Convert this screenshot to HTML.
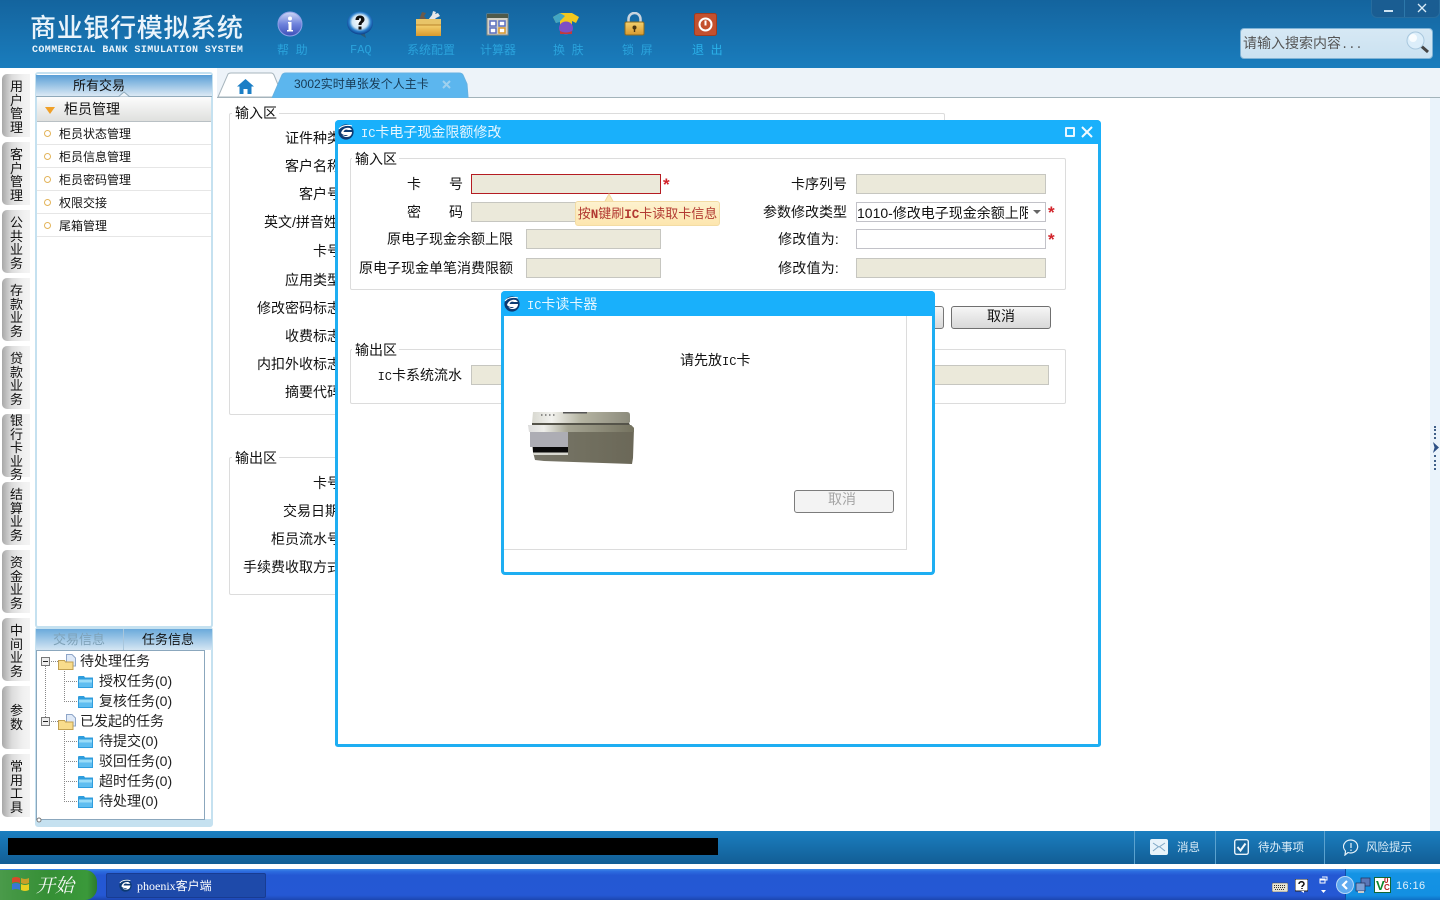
<!DOCTYPE html>
<html lang="zh"><head><meta charset="utf-8"><title>商业银行模拟系统</title>
<style>
html,body{margin:0;padding:0;width:1440px;height:900px;overflow:hidden;background:#fff}
body{position:relative;font:14px/16px "Liberation Sans","WenQuanYi Zen Hei","Noto Sans CJK SC",sans-serif;color:#111}
div,span,svg{position:absolute;box-sizing:border-box}
.t{white-space:nowrap}
.ic{position:static;font-family:"Liberation Mono",monospace;font-size:12px}
.fs{border:1px solid #dcdcdc;border-radius:2px}
.lg{background:#fff;padding:0 2px 0 3px;white-space:nowrap}
.d{background:#ebe9da;border:1px solid #c6c6c0}
.w{background:#fff;border:1px solid #c2c2c8}
.tab{left:2px;width:28px;height:63px;border-radius:5px 0 0 5px;background:linear-gradient(90deg,#a8a8a8,#dcdcdc 35%,#f0f0f0 75%,#f4f4f4);text-align:center;font-size:13px;line-height:13.5px;color:#111;padding-left:1px}
.m{left:37px;width:174px;height:23px;border-bottom:1px solid #e6e6e6;font-size:12px;line-height:23px;padding:1px 0 0 22px;color:#111}
.m:before{content:"";position:absolute;left:7px;top:8px;width:7px;height:7px;border-radius:50%;border:1.5px solid #e3b45a;box-sizing:border-box;background:#fff}
.hl{font-size:12px;color:#2aa3dc;white-space:nowrap;line-height:14px;top:43px}
.req{color:#d2232a;font:bold 17px/16px "Liberation Sans",sans-serif}
.tr{font-size:14px;line-height:16px;white-space:nowrap;color:#222}
.dot-h{height:0;border-top:1px dotted #888}
.dot-v{width:0;border-left:1px dotted #888}
</style></head><body>
<svg width="0" height="0" style="position:absolute">
<defs>
<symbol id="ie" viewBox="0 0 16 16"><circle cx="8" cy="8" r="7.6" fill="#0c3a73"/><path d="M3 9c1-4 5-6 9-5l2 2-4 0c-2-1-4 0-4.500 2h8.500c0 3-2 5-5 5-3 0-4-1-4.500-2 2 1 4 1.500 5.500 0H7C5 11 4 10 3 9z" fill="#fff"/><path d="M1 5c3-4 9-4 13-3" stroke="#fff" stroke-width="1" fill="none"/></symbol>
<symbol id="fo" viewBox="0 0 15 13"><path d="M0 2q0-1 1-1h5l1 1.500h8V13H0z" fill="#2f9ddd"/><rect x="1" y="4.500" width="13" height="7.500" fill="#5fbdf0"/><rect x="1" y="4.500" width="13" height="3" fill="#9adcf8"/></symbol>
<symbol id="fy" viewBox="0 0 18 16"><path d="M8.500.5h5.500l3.500 3.500v8h-9z" fill="#dfe9f7" stroke="#8fa6c9"/><path d="M.5 6.500h6l1 1.500h7.500v7.500H.5z" fill="#f8dc8c" stroke="#c2a050"/></symbol>
<symbol id="mn" viewBox="0 0 9 9"><rect x=".5" y=".5" width="8" height="8" fill="#eee" stroke="#777"/><path d="M2 4.500h5" stroke="#222"/></symbol>
<linearGradient id="gi" x1="0" y1="0" x2="0" y2="1"><stop offset="0" stop-color="#cfd8f6"/><stop offset=".5" stop-color="#6f83dc"/><stop offset="1" stop-color="#3d50b8"/></linearGradient>
<radialGradient id="gq" cx=".5" cy=".45" r=".55"><stop offset="0" stop-color="#fff"/><stop offset=".55" stop-color="#cfe6f6"/><stop offset=".75" stop-color="#2a80cc"/><stop offset="1" stop-color="#0b3c88"/></radialGradient>
<linearGradient id="gb" x1="0" y1="0" x2="0" y2="1"><stop offset="0" stop-color="#f4d06e"/><stop offset="1" stop-color="#d89a2e"/></linearGradient>
<linearGradient id="gr" x1="0" y1="0" x2="1" y2="0"><stop offset="0" stop-color="#77756a"/><stop offset=".5" stop-color="#727060"/><stop offset="1" stop-color="#6b6858"/></linearGradient>
<linearGradient id="gt" x1="0" y1="0" x2="1" y2="0"><stop offset="0" stop-color="#d8d8d0"/><stop offset=".2" stop-color="#f2f2ee"/><stop offset=".5" stop-color="#b5b4a2"/><stop offset="1" stop-color="#8c8b7c"/></linearGradient>
<linearGradient id="gt2" x1="0" y1="0" x2="1" y2="0"><stop offset="0" stop-color="#ddd"/><stop offset=".15" stop-color="#eeeeea"/><stop offset=".38" stop-color="#a5a492"/><stop offset="1" stop-color="#74725f"/></linearGradient>
</defs></svg>

<!-- header -->
<div style="left:0;top:0;width:1440px;height:68px;background:linear-gradient(180deg,#14649e,#1a7dbd)"></div>
<div class="t" style="left:30px;top:13px;font-size:26px;line-height:30px;letter-spacing:.7px;color:#eaf4fb;font-family:'Liberation Sans','Noto Sans CJK SC',sans-serif;font-weight:500">商业银行模拟系统</div>
<div class="t" style="left:32px;top:45px;font:bold 10px/12px 'Liberation Mono',monospace;letter-spacing:.4px;color:#eaf4fb">COMMERCIAL BANK SIMULATION SYSTEM</div>

<svg style="left:277px;top:11px" width="26" height="26" viewBox="0 0 26 26"><circle cx="13" cy="13" r="12" fill="url(#gi)" stroke="#8fa0e6"/><circle cx="13" cy="7.500" r="2" fill="#fff"/><path d="M11 11h3.500v8H16v1.500h-6V19h1.500v-6.500H11z" fill="#fff"/></svg>
<div class="hl" style="left:277px;">帮&nbsp;&nbsp;助</div>
<svg style="left:346px;top:11px" width="28" height="27" viewBox="0 0 28 27"><path d="M12 20l6 0 2 7-5-3z" fill="#2a5a7a"/><ellipse cx="14" cy="12" rx="13" ry="11.500" fill="url(#gq)"/><path d="M9.500 9c0-3 2-4.500 4.500-4.500s4.500 1.500 4.500 4c0 3-3 3-3 5.500h-3c0-3.500 2.500-3.500 2.500-5.500 0-1-.5-1.500-1-1.500s-1 .7-1 2zM12.500 15.500h3v3h-3z" fill="#111"/></svg>
<div class="hl" style="left:350px;font-family:'Liberation Mono',monospace;font-size:12px">FAQ</div>
<svg style="left:415px;top:11px" width="27" height="26" viewBox="0 0 27 26"><path d="M4 9l3-8 4 1-2 3 3 4z" fill="#6b5a4a"/><path d="M13 9l4-5 1-4 3 1-1 2 3-1 2 3-4 2-2 2z" fill="#e8e8e8"/><rect x="1" y="8" width="25" height="6" fill="#e8c468"/><rect x="1" y="14" width="25" height="11" fill="url(#gb)"/><path d="M1 14h25" stroke="#b9842a"/></svg>
<div class="hl" style="left:407px;">系统配置</div>
<svg style="left:486px;top:13px" width="23" height="23" viewBox="0 0 23 23"><rect x="1" y="1" width="21" height="21" fill="#d4d2c8" stroke="#8a8a80"/><rect x="1" y="1" width="21" height="4" fill="#4f5a4a"/><rect x="4" y="8" width="6" height="5" fill="#fff" stroke="#5a6fc0" stroke-width="1.500"/><rect x="13" y="8" width="6" height="5" fill="#fff" stroke="#5a6fc0" stroke-width="1.500"/><rect x="4" y="15" width="6" height="5" fill="#fff" stroke="#5a6fc0" stroke-width="1.500"/><rect x="13" y="15" width="6" height="5" fill="#fff" stroke="#d9992e" stroke-width="1.500"/></svg>
<div class="hl" style="left:480px;">计算器</div>
<svg style="left:552px;top:12px" width="28" height="23" viewBox="0 0 28 23"><path d="M1 5l7-4h12l7 4-3 6-4-2v13H8V9L4 11z" fill="#f2c81e"/><path d="M1 5l7-4 5 3-5 5v1l-4 1z" fill="#42a5c4"/><ellipse cx="14" cy="16" rx="7" ry="6.500" fill="#7d4fc6"/><path d="M8 19c4 2 8 2 12 0v3H8z" fill="#c23a3a"/></svg>
<div class="hl" style="left:553px;">换&nbsp;&nbsp;肤</div>
<svg style="left:624px;top:12px" width="21" height="24" viewBox="0 0 21 24"><path d="M4.500 11V7a6 6 0 0 1 12 0v4" fill="none" stroke="#c9d4de" stroke-width="2.500"/><rect x="1" y="10" width="19" height="13" rx="1.500" fill="url(#gb)" stroke="#8a6a20"/><circle cx="10.500" cy="15.500" r="2" fill="#4a3510"/><rect x="9.800" y="16" width="1.400" height="4" fill="#4a3510"/></svg>
<div class="hl" style="left:622px;">锁&nbsp;&nbsp;屏</div>
<svg style="left:694px;top:13px" width="23" height="23" viewBox="0 0 23 23"><rect x=".5" y=".5" width="22" height="22" rx="2" fill="#c4502e" stroke="#a03c20"/><circle cx="11.500" cy="11.500" r="6" fill="none" stroke="#fff" stroke-width="2"/><path d="M11.500 7.500v5" stroke="#fff" stroke-width="2"/></svg>
<div class="hl" style="left:692px;color:#2bb2ea">退&nbsp;&nbsp;出</div>

<div style="left:1371px;top:-4px;width:69px;height:22px;border-radius:0 0 6px 6px;background:#1a5d92;border:1px solid #276d9f"></div>
<div style="left:1404px;top:0;width:1px;height:17px;background:#2d78aa"></div>
<div style="left:1384px;top:10px;width:9px;height:2px;background:#cde3f2"></div>
<svg style="left:1417px;top:3px" width="10" height="10" viewBox="0 0 10 10"><path d="M1 1l8 8M9 1l-8 8" stroke="#d9ebf7" stroke-width="1.300"/></svg>
<div style="left:1240px;top:28px;width:193px;height:31px;border-radius:4px;background:linear-gradient(180deg,#d6e8f4,#cbe2f1);border:1px solid #7fb3d6"></div>
<div class="t" style="left:1243px;top:35px;color:#555">请输入搜索内容<span class="ic">...</span></div>
<svg style="left:1405px;top:30px" width="26" height="25" viewBox="0 0 26 25"><path d="M15 15l8 7" stroke="#444" stroke-width="3"/><circle cx="10.500" cy="10.500" r="8.500" fill="#dceefa" stroke="#a9c8de"/><circle cx="8" cy="8" r="4" fill="#fff" opacity=".8"/></svg>

<!-- left side tabs -->
<div class="tab" style="top:74px;padding-top:6px">用<br>户<br>管<br>理</div>
<div class="tab" style="top:142px;padding-top:6px">客<br>户<br>管<br>理</div>
<div class="tab" style="top:210px;padding-top:6px">公<br>共<br>业<br>务</div>
<div class="tab" style="top:278px;padding-top:6px">存<br>款<br>业<br>务</div>
<div class="tab" style="top:346px;padding-top:6px">贷<br>款<br>业<br>务</div>
<div class="tab" style="top:414px;padding-top:0">银<br>行<br>卡<br>业<br>务</div>
<div class="tab" style="top:482px;padding-top:6px">结<br>算<br>业<br>务</div>
<div class="tab" style="top:550px;padding-top:6px">资<br>金<br>业<br>务</div>
<div class="tab" style="top:618px;padding-top:6px">中<br>间<br>业<br>务</div>
<div class="tab" style="top:686px;padding-top:18px">参<br>数</div>
<div class="tab" style="top:754px;padding-top:6px">常<br>用<br>工<br>具</div>

<!-- left panel -->
<div style="left:35px;top:72px;width:178px;height:556px;background:#fff;border:2px solid #c5e1f0;border-radius:3px"></div>
<div style="left:36px;top:75px;width:176px;height:22px;background:linear-gradient(180deg,#5a9fd6,#dbe9f4);border-bottom:1px solid #8fa9ba"></div>
<div class="t" style="left:73px;top:78px;font-size:13px">所有交易</div>
<svg style="left:118px;top:91px" width="12" height="6" viewBox="0 0 12 6"><path d="M0 6l6-5 6 5z" fill="#eef4f9" stroke="#8fa9ba"/></svg>
<div style="left:37px;top:97px;width:174px;height:25px;background:linear-gradient(180deg,#fcfcfc,#dfe0de);border-bottom:1px solid #b9c0c4"></div>
<svg style="left:45px;top:107px" width="10" height="7" viewBox="0 0 10 7"><path d="M0 0h10L5 7z" fill="#f0a028"/></svg>
<div class="t" style="left:64px;top:101px;font-size:14px">柜员管理</div>
<div class="m" style="top:122px">柜员状态管理</div>
<div class="m" style="top:145px">柜员信息管理</div>
<div class="m" style="top:168px">柜员密码管理</div>
<div class="m" style="top:191px">权限交接</div>
<div class="m" style="top:214px">尾箱管理</div>

<div style="left:35px;top:627px;width:178px;height:200px;background:#fff;border:2px solid #c5e1f0;border-radius:3px;border-bottom:8px solid #c5e1f0"></div>
<div style="left:36px;top:629px;width:87px;height:21px;background:linear-gradient(180deg,#6aaadb,#d5e6f3)"></div>
<div style="left:123px;top:629px;width:89px;height:21px;background:linear-gradient(180deg,#6aaadb,#d5e6f3);border-left:1px solid #a8c6dc"></div>
<div class="t" style="left:53px;top:632px;color:#7fa2b8;font-size:13px">交易信息</div>
<div class="t" style="left:142px;top:632px;font-size:13px">任务信息</div>
<div style="left:36px;top:650px;width:169px;height:170px;background:#fff;border:1px solid #8ba7bd"></div>
<svg style="left:36px;top:817px" width="6" height="6" viewBox="0 0 6 6"><circle cx="3" cy="3" r="2" fill="#fff" stroke="#777"/></svg>

<div class="dot-v" style="left:45px;top:664px;height:55px"></div>
<div class="dot-v" style="left:64px;top:668px;height:34px"></div>
<div class="dot-v" style="left:64px;top:728px;height:74px"></div>
<div class="dot-h" style="left:49px;top:661px;width:9px"></div>
<div class="dot-h" style="left:49px;top:721px;width:9px"></div>
<div class="dot-h" style="left:64px;top:681px;width:13px"></div>
<div class="dot-h" style="left:64px;top:701px;width:13px"></div>
<div class="dot-h" style="left:64px;top:741px;width:13px"></div>
<div class="dot-h" style="left:64px;top:761px;width:13px"></div>
<div class="dot-h" style="left:64px;top:781px;width:13px"></div>
<div class="dot-h" style="left:64px;top:801px;width:13px"></div>
<svg style="left:41px;top:657px" width="9" height="9"><use href="#mn"/></svg>
<svg style="left:41px;top:717px" width="9" height="9"><use href="#mn"/></svg>
<svg style="left:58px;top:654px" width="18" height="16"><use href="#fy" width="18" height="16"/></svg>
<svg style="left:58px;top:714px" width="18" height="16"><use href="#fy" width="18" height="16"/></svg>
<svg style="left:78px;top:675px" width="15" height="13"><use href="#fo" width="15" height="13"/></svg>
<svg style="left:78px;top:695px" width="15" height="13"><use href="#fo" width="15" height="13"/></svg>
<svg style="left:78px;top:735px" width="15" height="13"><use href="#fo" width="15" height="13"/></svg>
<svg style="left:78px;top:755px" width="15" height="13"><use href="#fo" width="15" height="13"/></svg>
<svg style="left:78px;top:775px" width="15" height="13"><use href="#fo" width="15" height="13"/></svg>
<svg style="left:78px;top:795px" width="15" height="13"><use href="#fo" width="15" height="13"/></svg>
<div class="tr" style="left:80px;top:653px">待处理任务</div>
<div class="tr" style="left:99px;top:673px">授权任务(0)</div>
<div class="tr" style="left:99px;top:693px">复核任务(0)</div>
<div class="tr" style="left:80px;top:713px">已发起的任务</div>
<div class="tr" style="left:99px;top:733px">待提交(0)</div>
<div class="tr" style="left:99px;top:753px">驳回任务(0)</div>
<div class="tr" style="left:99px;top:773px">超时任务(0)</div>
<div class="tr" style="left:99px;top:793px">待处理(0)</div>

<!-- tab bar -->
<div style="left:217px;top:68px;width:1223px;height:30px;background:#edf3f9;border-bottom:1px solid #a3b3ba"></div>
<svg style="left:217px;top:72px" width="252" height="26" viewBox="0 0 252 26"><path d="M1 25L11 2q1-1 3-1h40q2 0 3 2l9 22z" fill="#fff" stroke="#a7b5bd"/><path d="M55 26L65 3q1-2 4-2h173q3 0 4 2l4 9 1 13v1z" fill="#5cb6ee" stroke="#66b2e2"/></svg>
<svg style="left:237px;top:79px" width="17" height="15" viewBox="0 0 17 15"><path d="M8.500 0L0 7.500h2.500V15h4v-5h4v5h4V7.500H17z" fill="#1c7fc6"/></svg>
<div class="t" style="left:294px;top:76px;font-size:12px;color:#163a55">3002实时单张发个人主卡</div>
<svg style="left:442px;top:80px" width="9" height="9" viewBox="0 0 9 9"><path d="M1 1l7 7M8 1l-7 7" stroke="#9fd0ee" stroke-width="2"/></svg>

<!-- right handle -->
<div style="left:1430px;top:98px;width:10px;height:733px;background:#eaf3fb"></div>
<div style="left:1434px;top:426px;width:2px;height:13px;border-left:2px dotted #3f5f88"></div>
<div style="left:1434px;top:455px;width:2px;height:15px;border-left:2px dotted #3f5f88"></div>
<svg style="left:1433px;top:442px" width="6" height="11" viewBox="0 0 6 11"><path d="M0 0l6 5.500L0 11l1.500-5.500z" fill="#2c4f85"/></svg>

<!-- background form -->
<div class="fs" style="left:229px;top:113px;width:716px;height:302px"></div>
<div class="lg" style="left:232px;top:105px">输入区</div>
<div class="t" style="right:1099px;top:130px">证件种类</div>
<div class="t" style="right:1099px;top:158px">客户名称</div>
<div class="t" style="right:1099px;top:186px">客户号</div>
<div class="t" style="left:264px;top:214px">英文/拼音姓名</div>
<div class="t" style="right:1099px;top:243px">卡号</div>
<div class="t" style="right:1099px;top:272px">应用类型</div>
<div class="t" style="right:1099px;top:300px">修改密码标志</div>
<div class="t" style="right:1099px;top:328px">收费标志</div>
<div class="t" style="right:1099px;top:356px">内扣外收标志</div>
<div class="t" style="right:1099px;top:384px">摘要代码</div>
<div class="fs" style="left:229px;top:457px;width:300px;height:138px"></div>
<div class="lg" style="left:232px;top:450px">输出区</div>
<div class="t" style="right:1099px;top:475px">卡号</div>
<div class="t" style="left:283px;top:503px">交易日期</div>
<div class="t" style="right:1099px;top:531px">柜员流水号</div>
<div class="t" style="right:1099px;top:559px">手续费收取方式</div>

<!-- dialog 1 -->
<div style="left:335px;top:120px;width:766px;height:627px;background:#fff;border:3px solid #1eaef2;border-top:0;border-radius:4px 4px 3px 3px"></div>
<div style="left:335px;top:120px;width:766px;height:24px;background:#19b0fb;border-radius:4px 4px 0 0"></div>
<svg style="left:338px;top:124px" width="16" height="16"><use href="#ie" width="16" height="16"/></svg>
<div class="t" style="left:361px;top:124px;color:#e8f7ff"><span class="ic">IC</span>卡电子现金限额修改</div>
<div style="left:1065px;top:127px;width:10px;height:10px;border:2px solid #e6f6ff;border-radius:1px"></div>
<svg style="left:1081px;top:126px" width="12" height="12" viewBox="0 0 12 12"><path d="M1 1l10 10M11 1L1 11" stroke="#f2fbff" stroke-width="2"/></svg>

<div class="fs" style="left:350px;top:158px;width:716px;height:132px"></div>
<div class="lg" style="left:352px;top:151px">输入区</div>
<div class="t" style="left:407px;top:176px">卡</div><div class="t" style="left:449px;top:176px">号</div>
<div class="d" style="left:471px;top:174px;width:190px;height:20px;border-color:#b51c22"></div>
<div class="req" style="left:663px;top:177px">*</div>
<div class="t" style="left:407px;top:204px">密</div><div class="t" style="left:449px;top:204px">码</div>
<div class="d" style="left:471px;top:202px;width:190px;height:20px"></div>
<div class="t" style="right:927px;top:231px">原电子现金余额上限</div>
<div class="d" style="left:526px;top:229px;width:135px;height:20px"></div>
<div class="t" style="right:927px;top:260px">原电子现金单笔消费限额</div>
<div class="d" style="left:526px;top:258px;width:135px;height:20px"></div>

<div class="t" style="right:593px;top:176px">卡序列号</div>
<div class="d" style="left:856px;top:174px;width:190px;height:20px"></div>
<div class="t" style="right:593px;top:204px">参数修改类型</div>
<div class="w" style="left:856px;top:202px;width:190px;height:20px;overflow:hidden"><span class="t" style="left:0;top:2px;width:171px;overflow:hidden">1010-修改电子现金余额上限</span></div>
<svg style="left:1033px;top:210px" width="8" height="4" viewBox="0 0 8 4"><path d="M0 0h8L4 4z" fill="#666"/></svg>
<div class="req" style="left:1048px;top:205px">*</div>
<div class="t" style="right:601px;top:231px;letter-spacing:.2px">修改值为:</div>
<div class="w" style="left:856px;top:229px;width:190px;height:20px"></div>
<div class="req" style="left:1048px;top:232px">*</div>
<div class="t" style="right:601px;top:260px;letter-spacing:.2px">修改值为:</div>
<div class="d" style="left:856px;top:258px;width:190px;height:20px"></div>

<svg style="left:604px;top:193px" width="10" height="10" viewBox="0 0 10 10"><path d="M0 10L5 1l5 9z" fill="#fdeab8" stroke="#f2d8a0"/></svg>
<div class="t" style="left:575px;top:201px;width:145px;height:25px;background:linear-gradient(180deg,#fdf2cf,#fde6ae);border:1px solid #f3dca4;border-radius:3px;color:#b23a32;font-size:13px;line-height:24px;text-align:center">按<span class="ic" style="font-size:12.500px;font-weight:bold">N</span>键刷<span class="ic" style="font-size:12.500px;font-weight:bold">IC</span>卡读取卡信息</div>

<div style="left:840px;top:306px;width:104px;height:23px;background:linear-gradient(180deg,#f6f6f6,#d8d8d8);border:1px solid #777;border-radius:3px"></div>
<div class="t" style="left:951px;top:306px;width:100px;height:23px;background:linear-gradient(180deg,#f6f6f6,#d8d8d8);border:1px solid #6f6f6f;border-radius:3px;text-align:center;line-height:19px">取消</div>

<div class="fs" style="left:350px;top:349px;width:716px;height:55px"></div>
<div class="lg" style="left:352px;top:342px">输出区</div>
<div class="t" style="right:978px;top:367px"><span class="ic">IC</span>卡系统流水</div>
<div class="d" style="left:471px;top:365px;width:578px;height:20px"></div>

<!-- dialog 2 -->
<div style="left:501px;top:291px;width:434px;height:284px;background:#fff;border:3px solid #1eaef2;border-top:0;border-radius:4px"></div>
<div style="left:501px;top:291px;width:434px;height:25px;background:#19b0fb;border-radius:4px 4px 0 0"></div>
<svg style="left:504px;top:296px" width="16" height="16"><use href="#ie" width="16" height="16"/></svg>
<div class="t" style="left:527px;top:296px;color:#e8f7ff"><span class="ic">IC</span>卡读卡器</div>
<div style="left:504px;top:316px;width:403px;height:234px;border-right:1px solid #dcdcdc;border-bottom:1px solid #dcdcdc"></div>
<div class="t" style="left:680px;top:352px;color:#111">请先放<span class="ic">IC</span>卡</div>
<svg style="left:528px;top:410px" width="107" height="55" viewBox="0 0 107 55">
<path d="M5 2h94q3 0 3 3v7l-1 1H4z" fill="url(#gt)"/>
<path d="M4 13h97l1 2H4z" fill="#55544a"/>
<path d="M0 15h103l3 3-1 30-1 6-88-3-9-1-2-8-3-22z" fill="url(#gr)"/>
<path d="M0 15h103l3 3v4H1z" fill="url(#gt2)"/>
<rect x="2" y="22" width="38" height="15" fill="#adadb4"/>
<rect x="5" y="37" width="35" height="5.500" fill="#0a0a0a"/>
<path d="M5 42.500h35v2.500H5z" fill="#d8d8d0"/>
<path d="M13 5h1.500M17 5h1.500M21 5h1.500M25 5h1.500" stroke="#333"/>
<rect x="35" y="2" width="24" height="1.500" fill="#555"/>
</svg>
<div class="t" style="left:794px;top:490px;width:100px;height:23px;background:#f3f3f3;border:1px solid #7c7c7c;border-radius:3px;text-align:center;line-height:17px;padding-right:4px;color:#a5a5a5">取消</div>

<!-- status bar -->
<div style="left:0;top:831px;width:1440px;height:33px;background:linear-gradient(180deg,#1b7fc0,#125e95)"></div>
<div style="left:8px;top:838px;width:710px;height:17px;background:#000"></div>
<div style="left:1134px;top:831px;width:1px;height:33px;background:#5ba2cf"></div>
<div style="left:1215px;top:831px;width:1px;height:33px;background:#5ba2cf"></div>
<div style="left:1324px;top:831px;width:1px;height:33px;background:#5ba2cf"></div>
<svg style="left:1150px;top:839px" width="18" height="16" viewBox="0 0 18 16"><rect width="18" height="16" rx="2" fill="#e8f3fa"/><path d="M3 4l6 4 6-4M3 12l5-4M15 12l-5-4" stroke="#7fa8c6" fill="none"/></svg>
<div class="t" style="left:1177px;top:840px;font-size:11.500px;color:#dcedf8">消息</div>
<svg style="left:1234px;top:839px" width="15" height="16" viewBox="0 0 15 16"><rect x=".7" y=".7" width="13.600" height="14.600" rx="2" fill="#19689f" stroke="#e8f3fa" stroke-width="1.400"/><path d="M3.500 8l3 3.500 5-7" stroke="#f2f8fc" stroke-width="2" fill="none"/></svg>
<div class="t" style="left:1258px;top:840px;font-size:11.500px;color:#dcedf8">待办事项</div>
<svg style="left:1343px;top:839px" width="16" height="17" viewBox="0 0 16 17"><path d="M8 1a7 6.500 0 1 1-3 12.500L2 16l.5-4A7 6.500 0 0 1 8 1z" fill="none" stroke="#e8f3fa" stroke-width="1.200"/><path d="M8 4v5M8 10.500v1.500" stroke="#e8f3fa" stroke-width="1.200"/></svg>
<div class="t" style="left:1366px;top:840px;font-size:11.500px;color:#dcedf8">风险提示</div>

<!-- taskbar -->
<div style="left:0;top:869px;width:1440px;height:31px;background:linear-gradient(180deg,#3f8ae8 0,#2c6bdf 8%,#2458d3 20%,#2558d4 85%,#1c46b0)"></div>
<div style="left:1345px;top:869px;width:95px;height:31px;background:linear-gradient(180deg,#35a6f0,#1493e4 15%,#1390e2 85%,#0f6fc4);border-left:1px solid #0f4ea8"></div>
<div style="left:0;top:870px;width:97px;height:30px;background:linear-gradient(90deg,#4a9a4a,#358f35 50%,#3a993a 90%,#2c7a2c);border-radius:0 12px 12px 0"></div>
<svg style="left:11px;top:875px" width="19" height="18" viewBox="0 0 19 18"><path d="M1 3q4-2 8 0v5q-4-2-8 0z" fill="#d84a2a"/><path d="M10 3q4 2 8 0v5q-4 2-8 0z" fill="#c8a028"/><path d="M1 9q4-2 8 0v6q-4-2-8 0z" fill="#3a77d4"/><path d="M10 9q4 2 8 0v6q-4 2-8 0z" fill="#e8d020"/></svg>
<div class="t" style="left:36px;top:873px;font:italic 19px/24px 'Noto Serif CJK SC','WenQuanYi Zen Hei',sans-serif;color:#f4f8f4">开始</div>
<div style="left:106px;top:873px;width:160px;height:25px;background:#1e4aaa;border:1px solid #183c92;border-radius:2px"></div>
<svg style="left:119px;top:879px" width="13" height="13"><use href="#ie" width="13" height="13"/></svg>
<div class="t" style="left:137px;top:879px;font:12px/14px 'Liberation Serif','WenQuanYi Zen Hei',serif;color:#fff">phoenix客户端</div>
<svg style="left:1272px;top:880px" width="16" height="12" viewBox="0 0 16 12"><rect y="3" width="16" height="9" rx="1" fill="#e7e3d2" stroke="#444" stroke-width=".6"/><path d="M2 5.500h12M2 7.500h12M3 9.500h10" stroke="#333" stroke-dasharray="1 1"/></svg>
<svg style="left:1295px;top:879px" width="13" height="14" viewBox="0 0 13 14"><rect width="13" height="12" rx="1" fill="#fff" stroke="#222"/><path d="M6 12l3 2v-2" fill="#fff"/><path d="M4 5c0-3 5-3 5 0 0 1.500-2 1.500-2 3M7 9v1" stroke="#111" stroke-width="1.500" fill="none"/></svg>
<svg style="left:1319px;top:876px" width="9" height="18" viewBox="0 0 9 18"><path d="M3 1h5v3H1V3" fill="none" stroke="#fff"/><rect x="1" y="3" width="5" height="4" fill="none" stroke="#fff"/><path d="M2 14h5l-2.500 3z" fill="#fff"/></svg>
<svg style="left:1336px;top:876px" width="18" height="18" viewBox="0 0 18 18"><circle cx="9" cy="9" r="8.500" fill="#5faaf0" stroke="#b7d9f7"/><path d="M11 5L7 9l4 4" stroke="#fff" stroke-width="2.200" fill="none"/></svg>
<svg style="left:1355px;top:877px" width="16" height="16" viewBox="0 0 16 16"><rect x="6" y="1" width="9" height="8" fill="#5b78b8" stroke="#222c55" stroke-width=".7"/><rect x="1" y="6" width="9" height="8" fill="#7da0d4" stroke="#222c55" stroke-width=".7"/><path d="M3 14h6v2H3z" fill="#ccc"/></svg>
<div style="left:1374px;top:877px;width:17px;height:16px;background:#fff;border:1px solid #163;overflow:hidden"><span class="t" style="left:1px;top:1px;font:bold 13px/14px 'Liberation Sans',sans-serif;color:#0a8a2a">V</span><span class="t" style="left:9px;top:-1px;font:bold 8px/8px 'Liberation Sans',sans-serif;color:#b22">0</span><span class="t" style="left:9px;top:6px;font:bold 8px/8px 'Liberation Sans',sans-serif;color:#b22">C</span></div>
<div class="t" style="left:1396px;top:879px;font-size:11px;line-height:14px;color:#dff0fb;letter-spacing:.4px">16:16</div>
</body></html>
